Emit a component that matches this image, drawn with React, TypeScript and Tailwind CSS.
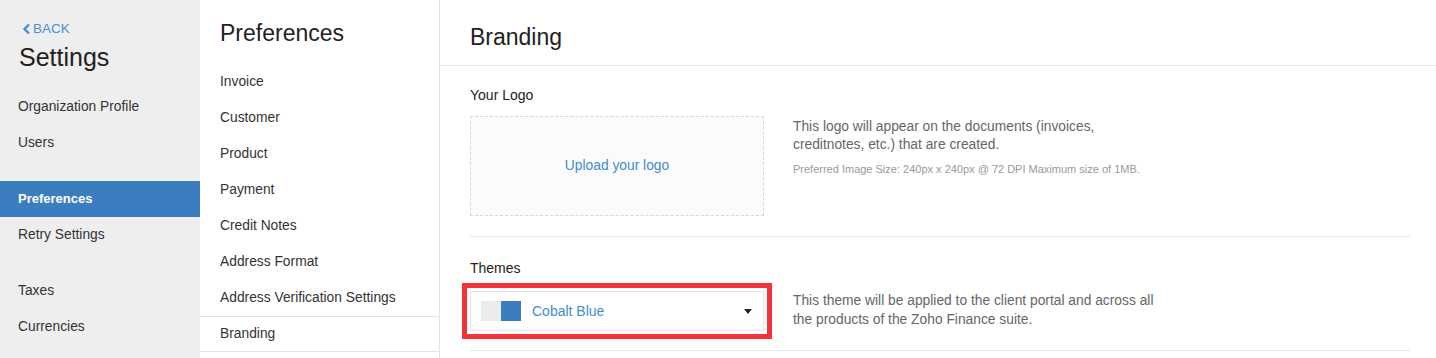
import React from 'react'

const font = { fontFamily: '"Liberation Sans", Arial, sans-serif' }

function SideItem({ label, active }: { label: string; active?: boolean }) {
  return (
    <div
      className={`h-[36px] flex items-center pl-[18px] ${
        active ? 'bg-[#3a7ebf] text-white font-bold text-[13px]' : 'text-[#333] text-[13.8px]'
      }`}
    >
      {label}
    </div>
  )
}

function PrefItem({ label, active }: { label: string; active?: boolean }) {
  return (
    <div
      className={`h-[36px] flex items-center pl-[20px] text-[13.8px] text-[#333] ${
        active ? 'border-y border-[#e2e2e2]' : ''
      }`}
    >
      {label}
    </div>
  )
}

export default function App() {
  return (
    <div className="flex h-[358px] w-[1436px] bg-white overflow-hidden" style={font}>
      {/* Settings sidebar */}
      <div className="w-[200px] shrink-0 bg-[#eeeeee] flex flex-col">
        <div className="pt-[20px] pl-[22px] flex items-center gap-[2px] text-[13.5px] leading-[18px] text-[#4a8fd4]">
          <svg width="9" height="12" viewBox="0 0 9 12">
            <polyline points="7,1.5 2.5,6 7,10.5" fill="none" stroke="#4a8fd4" strokeWidth="2.4" />
          </svg>
          <span>BACK</span>
        </div>
        <div className="pl-[19px] mt-[3px] text-[25px] leading-[32px] text-[#222]">Settings</div>
        <div className="mt-[16px]">
          <SideItem label="Organization Profile" />
          <SideItem label="Users" />
        </div>
        <div className="mt-[20px]">
          <SideItem label="Preferences" active />
          <SideItem label="Retry Settings" />
        </div>
        <div className="mt-[20px]">
          <SideItem label="Taxes" />
          <SideItem label="Currencies" />
        </div>
      </div>

      {/* Preferences list */}
      <div className="w-[240px] shrink-0 border-r border-[#e2e2e2] flex flex-col">
        <div className="pl-[20px] pt-[18px] text-[23px] leading-[30px] font-light text-[#222]">Preferences</div>
        <div className="mt-[16px]">
          <PrefItem label="Invoice" />
          <PrefItem label="Customer" />
          <PrefItem label="Product" />
          <PrefItem label="Payment" />
          <PrefItem label="Credit Notes" />
          <PrefItem label="Address Format" />
          <PrefItem label="Address Verification Settings" />
          <PrefItem label="Branding" active />
        </div>
      </div>

      {/* Branding content */}
      <div className="flex-1 flex flex-col">
        <div className="h-[66px] shrink-0 border-b border-[#e6e6e6] pl-[30px] flex items-center pt-[10px] text-[23px] text-[#222]">
          Branding
        </div>
        <div className="pl-[30px] pr-[26px]">
          <div className="border-b border-[#e6e6e6] pb-[20px]">
            <div className="pt-[20px] text-[14px] leading-[18px] text-[#222]">Your Logo</div>
            <div className="mt-[12px] flex">
              <div className="w-[294px] h-[100px] shrink-0 border border-dashed border-[#d8d8d8] bg-[#fbfbfb] flex items-center justify-center text-[13.8px] text-[#408dd0]">
                Upload your logo
              </div>
              <div className="ml-[29px] pt-[2px]">
                <div className="text-[13.8px] leading-[18px] text-[#666]">
                  This logo will appear on the documents (invoices,
                  <br />
                  creditnotes, etc.) that are created.
                </div>
                <div className="mt-[8px] text-[11px] leading-[14px] text-[#999]">
                  Preferred Image Size: 240px x 240px @ 72 DPI Maximum size of 1MB.
                </div>
              </div>
            </div>
          </div>
          <div className="border-b border-[#e6e6e6] pb-[19px]">
            <div className="pt-[22px] text-[14px] leading-[18px] text-[#222]">Themes</div>
            <div className="mt-[14px] flex">
              <div className="w-[294px] h-[40px] shrink-0 border border-[#e4e4e4] flex items-center pl-[10px] pr-[11px] outline-[5px] outline-solid outline-[#f5323a] outline-offset-[3px]">
                <div className="flex">
                  <div className="w-[20px] h-[20px] bg-[#ececec]" />
                  <div className="w-[20px] h-[20px] bg-[#3a7ebf]" />
                </div>
                <span className="ml-[11px] text-[14px] text-[#408dd0]">Cobalt Blue</span>
                <svg className="ml-auto" width="8" height="5" viewBox="0 0 8 5">
                  <polygon points="0,0 8,0 4,5" fill="#222" />
                </svg>
              </div>
              <div className="ml-[29px] text-[13.8px] leading-[19px] text-[#666]">
                This theme will be applied to the client portal and across all
                <br />
                the products of the Zoho Finance suite.
              </div>
            </div>
          </div>
        </div>
      </div>
    </div>
  )
}
